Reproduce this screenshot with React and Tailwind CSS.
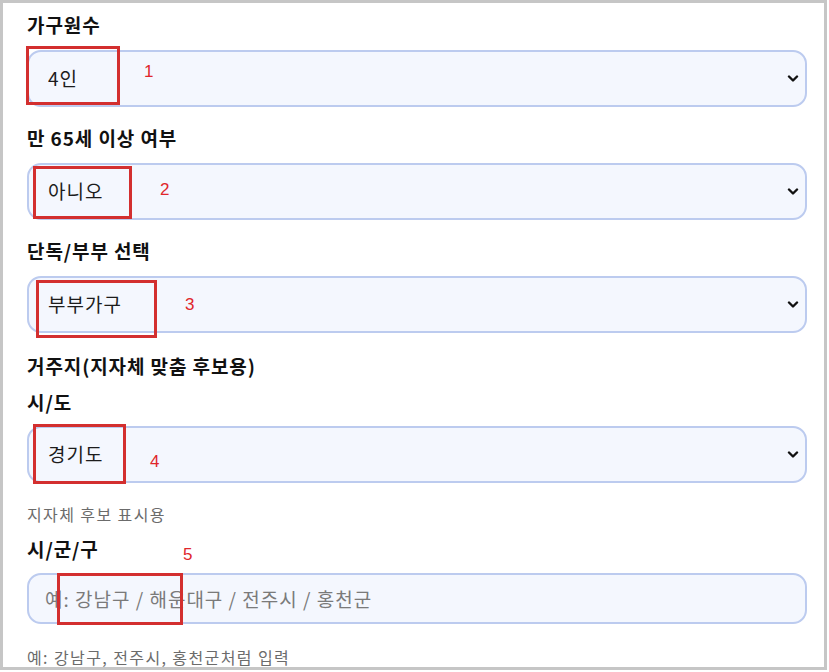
import React from "react";

function Chevron() {
  return (
    <svg className="pointer-events-none absolute right-[8px] top-1/2 -translate-y-1/2" width="12" height="8" viewBox="0 0 12 8">
      <path d="M2 1.5 L6 5.5 L10 1.5" fill="none" stroke="#111" strokeWidth="2.4" strokeLinecap="round" strokeLinejoin="round" />
    </svg>
  );
}

function Label({ children, className = "" }) {
  return <div className={"text-[19px] font-bold leading-[24px] tracking-[0.9px] text-[#111] " + className}>{children}</div>;
}

function Select({ value, children }) {
  return (
    <div className="relative h-[57px]">
      <select
        defaultValue={value}
        className="h-full w-full appearance-none rounded-[14px] border-2 border-[#bccbef] bg-[#f4f7fe] pl-[19px] text-[19px] tracking-[1px] text-[#1c1c1c] outline-none"
      >
        <option>{value}</option>
      </select>
      <Chevron />
      {children}
    </div>
  );
}

function Box({ className }) {
  return <div className={"pointer-events-none absolute border-[3px] border-[#d32f2f] " + className} />;
}

function Num({ className, children }) {
  return (
    <div className={"pointer-events-none absolute font-['Liberation_Sans',sans-serif] text-[17px] leading-[20px] text-[#e0262b] " + className}>
      {children}
    </div>
  );
}

export default function App() {
  return (
    <div className="h-[672px] w-[829px] bg-white">
      <div className="flex h-[670px] w-[827px] flex-col overflow-hidden border-[3px] border-[#c6c6c6] bg-white pl-[24px] pr-[17px] pt-[10px] font-['Noto_Sans_CJK_KR','Noto_Sans',sans-serif]">
        <Label>가구원수</Label>
        <div className="mt-[13px]">
          <Select value="4인">
            <Box className="left-[-1px] top-[-4px] h-[59px] w-[94px]" />
            <Num className="left-[117px] top-[12px]">1</Num>
          </Select>
        </div>

        <Label className="mt-[19px]">만 65세 이상 여부</Label>
        <div className="mt-[13px]">
          <Select value="아니오">
            <Box className="left-[6px] top-[3px] h-[53px] w-[99px]" />
            <Num className="left-[133px] top-[17px]">2</Num>
          </Select>
        </div>

        <Label className="mt-[19px]">단독/부부 선택</Label>
        <div className="mt-[13px]">
          <Select value="부부가구">
            <Box className="left-[9px] top-[4px] h-[58px] w-[121px]" />
            <Num className="left-[158px] top-[19px]">3</Num>
          </Select>
        </div>

        <Label className="mt-[21px]">거주지(지자체 맞춤 후보용)</Label>
        <Label className="mt-[12px]">시/도</Label>
        <div className="mt-[12px]">
          <Select value="경기도">
            <Box className="left-[6px] top-[-2px] h-[60px] w-[93px]" />
            <Num className="left-[123px] top-[26px]">4</Num>
          </Select>
        </div>
        <div className="mt-[21px] text-[16px] leading-[20px] tracking-[1.4px] text-[#6b6b6b]">지자체 후보 표시용</div>

        <Label className="mt-[13px]">시/군/구</Label>
        <div className="relative mt-[12px] h-[57px]">
          <input
            className="h-full w-full rounded-[14px] border-2 border-[#bccbef] bg-[#f4f7fe] pl-[16px] text-[19px] tracking-[1px] text-[#1c1c1c] outline-none placeholder:text-[#7a7a7a]"
            placeholder="예: 강남구 / 해운대구 / 전주시 / 홍천군"
          />
          <Box className="left-[30px] top-[0px] h-[52px] w-[126px]" />
          <Num className="left-[156px] top-[-28px]">5</Num>
        </div>
        <div className="mt-[23px] shrink-0 text-[16px] leading-[20px] tracking-[1.4px] text-[#6b6b6b]">예: 강남구, 전주시, 홍천군처럼 입력</div>
      </div>
    </div>
  );
}
